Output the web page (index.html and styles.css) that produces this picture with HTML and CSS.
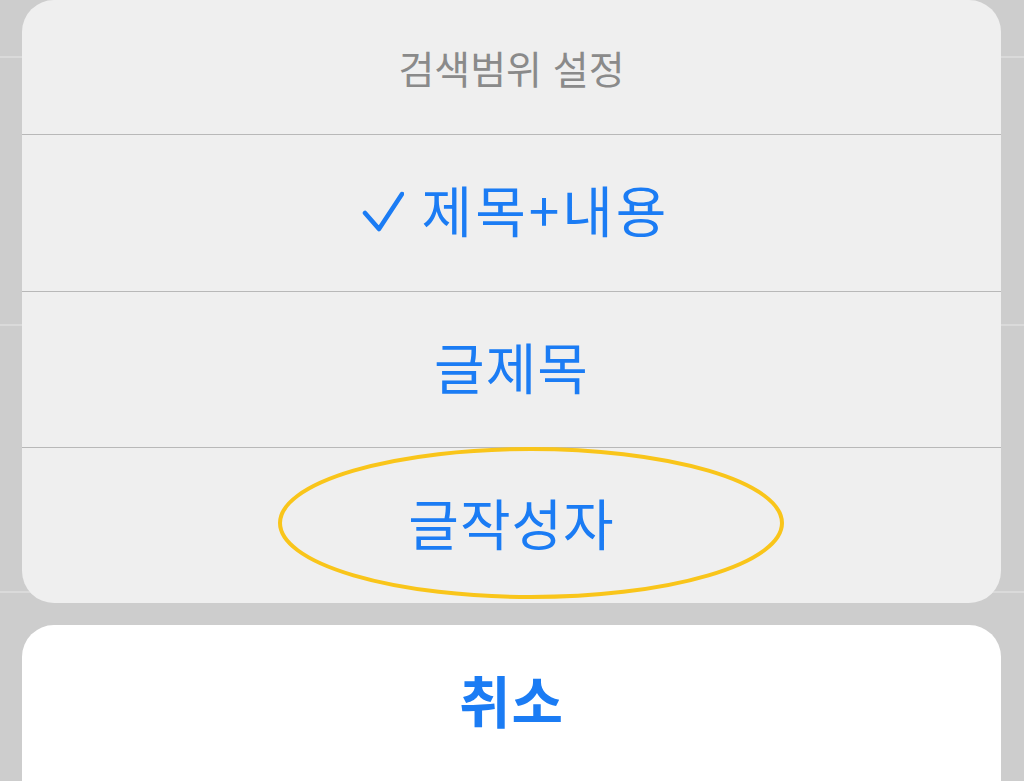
FILE: index.html
```html
<!DOCTYPE html>
<html lang="ko">
<head>
<meta charset="utf-8">
<title>검색범위 설정</title>
<link rel="stylesheet" href="styles.css">
</head>
<body>
<div class="screen">
  <div class="sheet">
    <div class="title">검색범위 설정</div>
    <div class="option first">
      <svg class="check" width="42" height="42" viewBox="0 0 42 42"><path d="M3 22 L17 38 L40 3" fill="none" stroke="#1b7cf4" stroke-width="4.5" stroke-linecap="round" stroke-linejoin="round"/></svg>
      <span>제목+내용</span>
    </div>
    <div class="option"><span>글제목</span></div>
    <div class="option marked">
      <span>글작성자</span>
      <svg class="ring" width="510" height="156" viewBox="0 0 510 156"><ellipse cx="255" cy="77" rx="251" ry="74" fill="none" stroke="#f9c51a" stroke-width="4"/></svg>
    </div>
  </div>
  <div class="cancel">취소</div>
</div>
</body>
</html>
```
FILE: styles.css
```css
html, body {
  margin: 0;
  padding: 0;
}
* {
  box-sizing: border-box;
}
body {
  width: 1024px;
  height: 781px;
  overflow: hidden;
  background-color: #cdcdcd;
  background-image:
    linear-gradient(to bottom, transparent 56px, #dadada 56px, #dadada 58px, transparent 58px),
    linear-gradient(to bottom, transparent 324px, #dadada 324px, #dadada 326px, transparent 326px),
    linear-gradient(to bottom, transparent 591px, #dadada 591px, #dadada 593px, transparent 593px);
  font-family: "Noto Sans CJK KR", "Noto Sans", sans-serif;
}
.screen {
  display: flex;
  flex-direction: column;
  padding: 0 23px 0 22px;
}
.sheet {
  background: #efefef;
  border-radius: 32px;
  overflow: hidden;
  display: flex;
  flex-direction: column;
}
.title {
  height: 134px;
  display: flex;
  align-items: center;
  justify-content: center;
  color: #8a8a8a;
  font-size: 39px;
  padding-bottom: 1px;
}
.option {
  position: relative;
  height: 156px;
  border-top: 1px solid #b8b8b8;
  display: flex;
  align-items: center;
  justify-content: center;
  gap: 18px;
  color: #1b7cf4;
  font-size: 55px;
  letter-spacing: 1px;
}
.option.first {
  height: 157px;
  letter-spacing: 3px;
}
.option span {
  position: relative;
  top: -5px;
}
.check {
  margin-left: 8px;
  margin-top: -2px;
}
.ring {
  position: absolute;
  left: 254px;
  top: -2px;
}
.cancel {
  margin-top: 22px;
  height: 156px;
  background: #ffffff;
  border-radius: 32px 32px 0 0;
  display: flex;
  justify-content: center;
  padding-top: 33px;
  color: #1b7cf4;
  font-size: 56px;
  font-weight: 700;
  letter-spacing: 1px;
}
```
